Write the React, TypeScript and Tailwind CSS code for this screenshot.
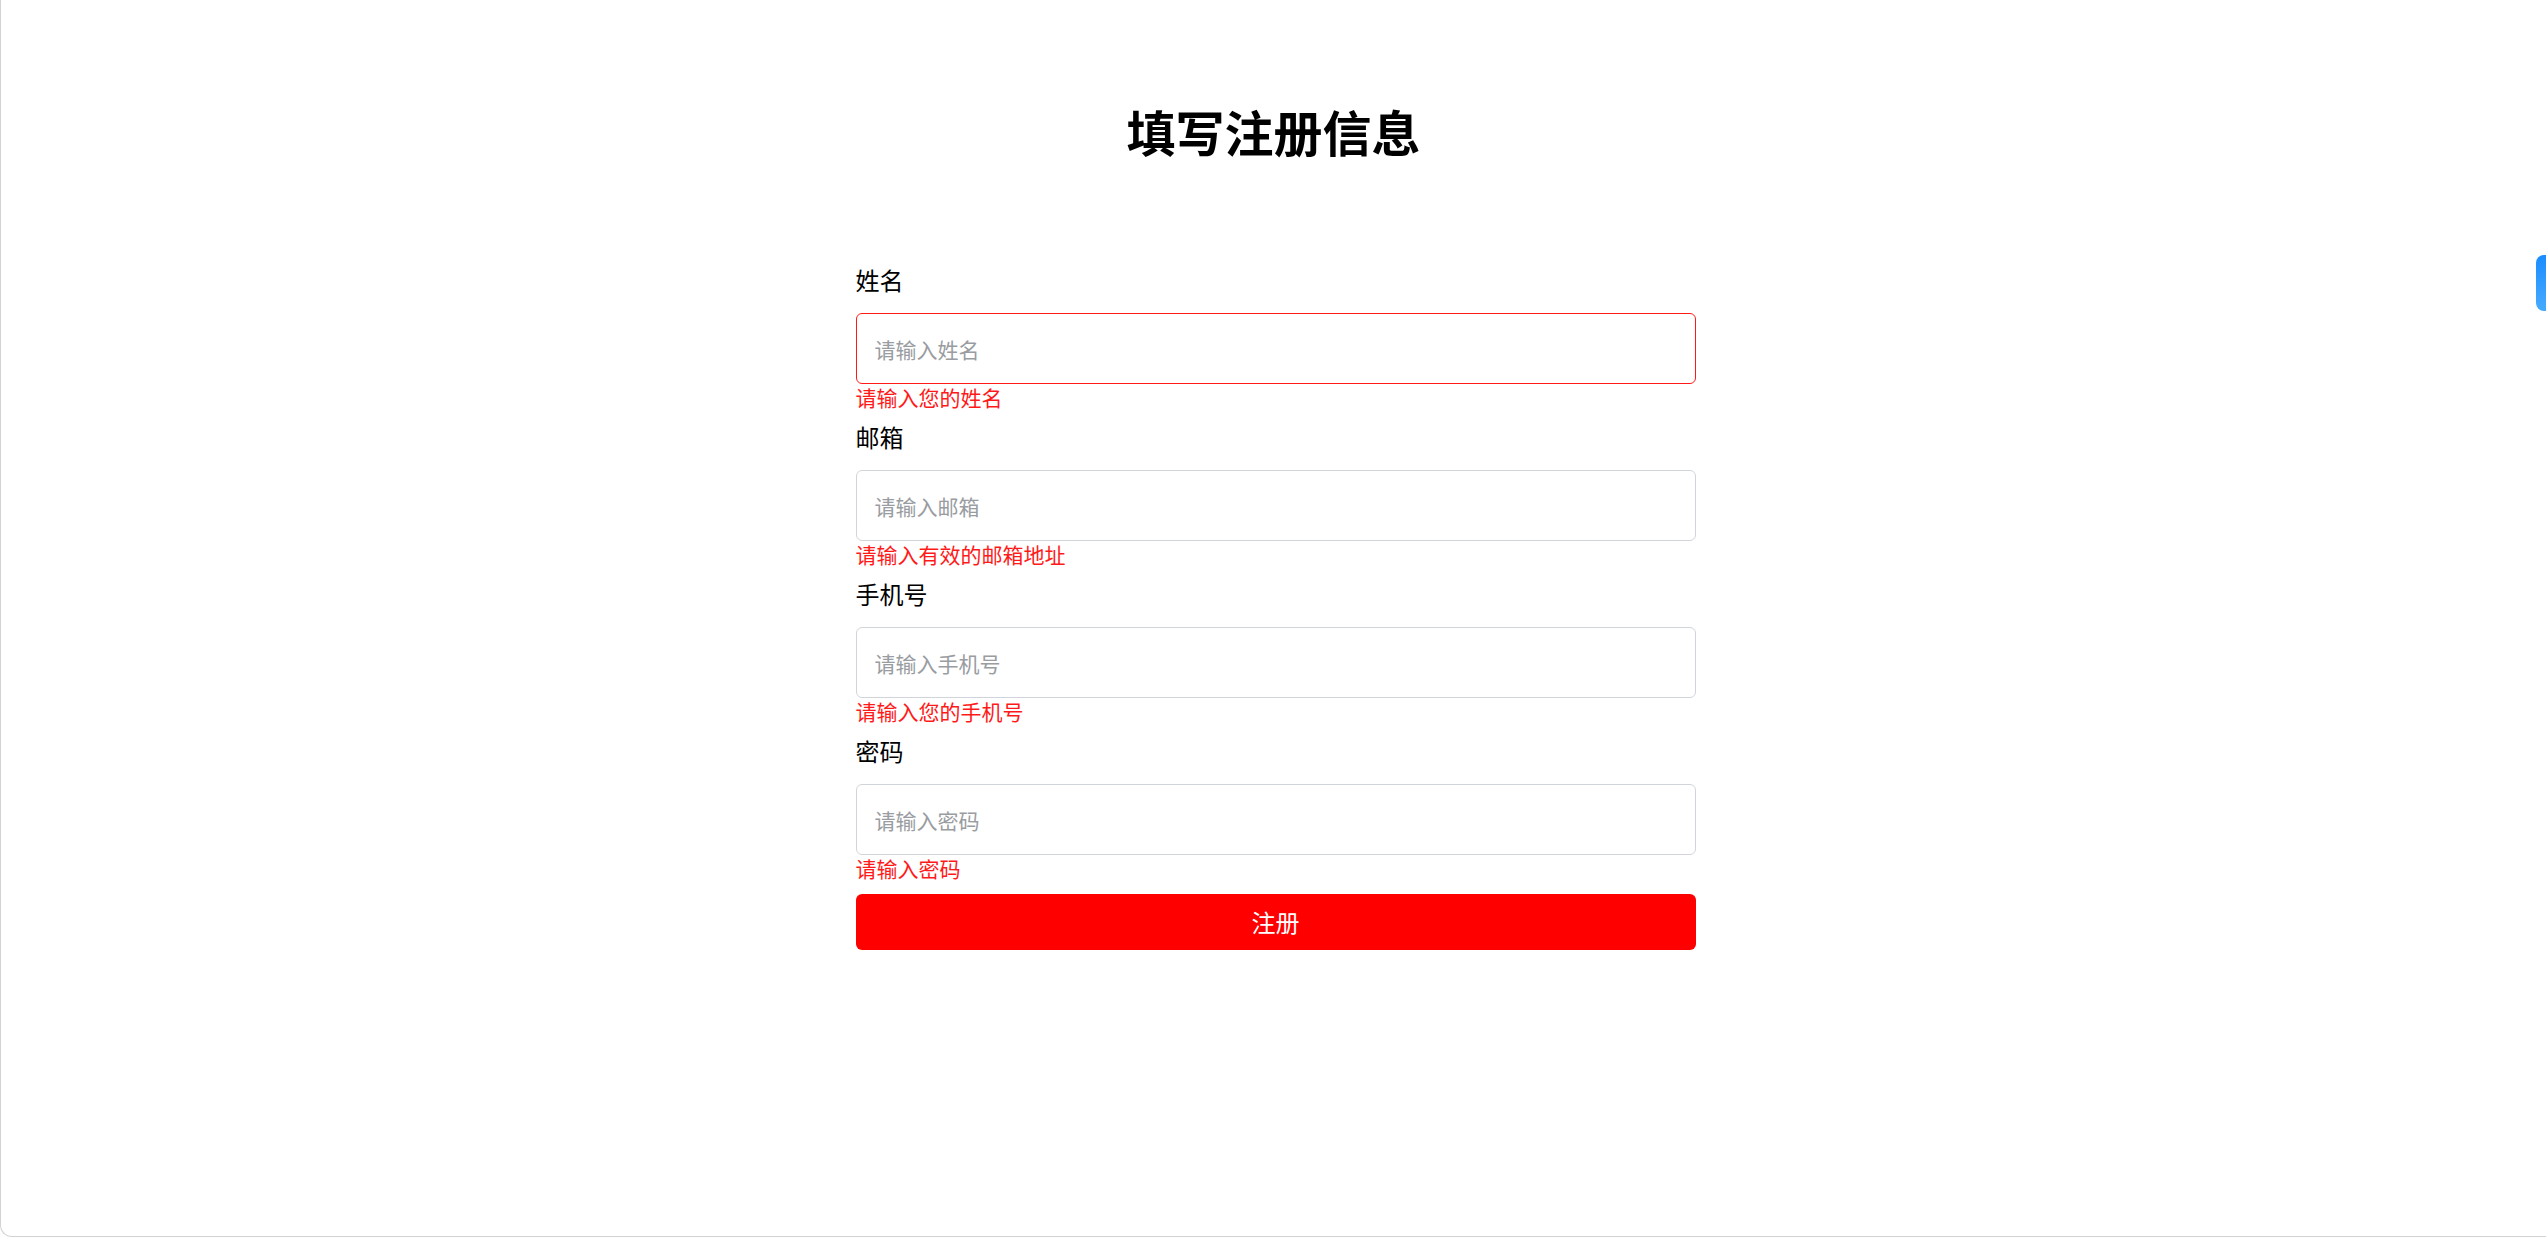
import { useState } from 'react'

const FIELDS = [
  { key: 'name', label: '姓名', placeholder: '请输入姓名', error: '请输入您的姓名', type: 'text' },
  { key: 'email', label: '邮箱', placeholder: '请输入邮箱', error: '请输入有效的邮箱地址', type: 'email' },
  { key: 'phone', label: '手机号', placeholder: '请输入手机号', error: '请输入您的手机号', type: 'tel' },
  { key: 'password', label: '密码', placeholder: '请输入密码', error: '请输入密码', type: 'password' },
]

export default function App() {
  const [values, setValues] = useState<Record<string, string>>({})

  return (
    <div className="relative h-[1237px] overflow-hidden bg-white border-l border-b border-[#d2d2d2] rounded-bl-[12px] font-['Noto_Sans_CJK_SC','Noto_Sans',sans-serif] text-black">
      {/* Title */}
      <h1 className="pt-[101px] text-center text-[49px] leading-[60px] font-bold">填写注册信息</h1>

      {/* Form */}
      <form className="mx-auto mt-[101px] w-[844px] pl-[4px] flex flex-col" onSubmit={(e) => e.preventDefault()}>
        {FIELDS.map((f, i) => (
          <div key={f.key} className="flex flex-col mb-[9px]">
            <label className="text-[24px] leading-[36px] mb-[15px]">{f.label}</label>
            <input
              type={f.type}
              value={values[f.key] || ''}
              onChange={(e) => setValues({ ...values, [f.key]: e.target.value })}
              placeholder={f.placeholder}
              className={
                'h-[71px] px-[18px] rounded-[6px] border-[1.5px] text-[21px] outline-none placeholder:text-[#999ca1] ' +
                (i === 0 ? 'border-[#ff1a1a]' : 'border-[#d1d5db]')
              }
            />
            <span className="text-[21px] leading-[26px] text-[#ff1a1a]">{f.error}</span>
          </div>
        ))}
        <button
          type="submit"
          className="mt-[4px] h-[56px] rounded-[6px] bg-[#ff0000] text-white text-[24px]"
        >
          注册
        </button>
      </form>

      {/* Side tab */}
      <div className="absolute right-0 top-[255px] w-[10px] h-[56px] rounded-l-[8px] bg-linear-to-b from-[#1a8cff] to-[#45abff]" />
    </div>
  )
}
